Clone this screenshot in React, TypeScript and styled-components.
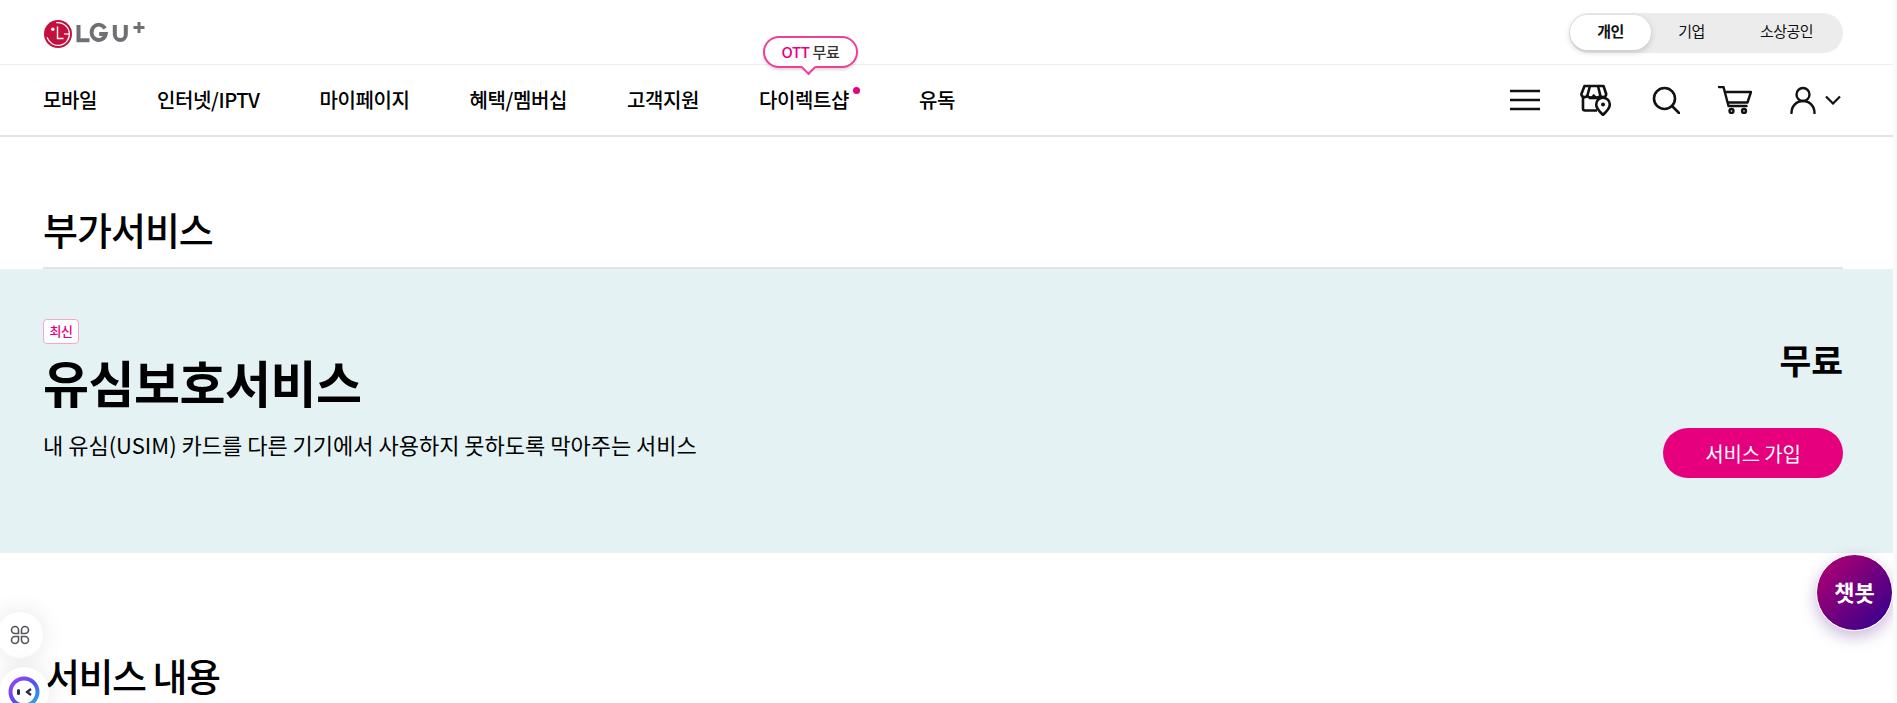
import React from 'react';
import styled, { createGlobalStyle } from 'styled-components';

const GlobalStyle = createGlobalStyle`
  html, body {
    margin: 0;
    padding: 0;
    height: 703px;
    overflow: hidden;
    background: #fafafa;
  }
  body {
    font-family: 'Noto Sans CJK KR', 'Noto Sans', sans-serif;
    color: #000;
  }
`;

const Page = styled.div`
  width: 1893px;
  height: 703px;
  overflow: hidden;
  position: relative;
  background: #fff;
`;

const TopBar = styled.div`
  height: 65px;
  box-sizing: border-box;
  border-bottom: 1px solid #eee;
  padding: 13px 50px 0 43px;
  display: flex;
  justify-content: space-between;
  align-items: flex-start;
`;

const Logo = styled.a`
  display: flex;
  align-items: flex-start;
  margin-top: 6px;
`;

const Segments = styled.div`
  display: flex;
  width: 274px;
  height: 40px;
  border-radius: 20px;
  background: #ececec;
  padding: 2px 0;
  box-sizing: border-box;
`;

const Segment = styled.button<{ $active?: boolean; $w: number }>`
  width: ${p => p.$w}px;
  border: 0;
  padding: 0 0 4px;
  height: 35px;
  margin-left: ${p => (p.$active ? '1px' : '0')};
  border-radius: 18px;
  font: ${p => (p.$active ? 700 : 400)} 15px/26px 'Noto Sans CJK KR', sans-serif;
  letter-spacing: -0.5px;
  color: #111;
  background: ${p => (p.$active ? '#fff' : 'transparent')};
  box-shadow: ${p => (p.$active ? '0 2px 6px rgba(0,0,0,0.18)' : 'none')};
`;

const NavBar = styled.nav`
  height: 72px;
  box-sizing: border-box;
  border-bottom: 2px solid #e4e4e4;
  padding: 0 50px 0 43px;
  display: flex;
  align-items: center;
  justify-content: space-between;
`;

const NavList = styled.ul`
  list-style: none;
  margin: 0;
  padding: 0;
  display: flex;
  gap: 60px;
`;

const NavItem = styled.li<{ $dot?: boolean }>`
  position: relative;
  font-size: 20px;
  font-weight: 500;
  line-height: 28px;
  letter-spacing: -0.4px;
  white-space: nowrap;
  padding-right: ${p => (p.$dot ? '10px' : '0')};
`;

const Dot = styled.span`
  position: absolute;
  top: 1px;
  right: -1px;
  width: 7px;
  height: 7px;
  border-radius: 50%;
  background: #e6007e;
`;

const Bubble = styled.div`
  position: absolute;
  top: -50px;
  left: 4px;
  width: 95px;
  height: 32px;
  box-sizing: border-box;
  background: #fff;
  border: 2px solid #ef3f9b;
  border-radius: 16px;
  box-shadow: 0 2px 3px rgba(0, 0, 0, 0.15);
  font-size: 15px;
  font-weight: 500;
  line-height: 27px;
  text-align: center;
  letter-spacing: -0.4px;
  color: #333;

  &::after {
    content: '';
    position: absolute;
    left: 38px;
    bottom: -7px;
    width: 11px;
    height: 11px;
    box-sizing: border-box;
    background: #fff;
    border-right: 2px solid #ef3f9b;
    border-bottom: 2px solid #ef3f9b;
    transform: rotate(45deg);
  }
`;

const Pink = styled.span`
  color: #e6007e;
`;

const IconRow = styled.div`
  display: flex;
  align-items: center;
  gap: 38px;
  margin-right: 2px;
`;

const IconButton = styled.span`
  display: flex;
  align-items: center;
  gap: 9px;
`;

const Main = styled.main`
  padding-top: 42px;
`;

const TitleRow = styled.div`
  margin: 0 50px 0 43px;
  height: 90px;
  box-sizing: border-box;
  border-bottom: 2px solid #e4e4e4;
`;

const PageTitle = styled.h1`
  margin: 0;
  padding-top: 22px;
  font-size: 38px;
  font-weight: 500;
  line-height: 56px;
  letter-spacing: -1px;
`;

const Banner = styled.section`
  height: 284px;
  background: #e4f2f3;
  padding: 50px 50px 0 43px;
  box-sizing: border-box;
  display: flex;
  justify-content: space-between;
`;

const BannerLeft = styled.div`
  display: flex;
  flex-direction: column;
  align-items: flex-start;
`;

const Badge = styled.span`
  width: 36px;
  height: 25px;
  box-sizing: border-box;
  background: #fff;
  border: 1px solid #f5a6d0;
  border-radius: 4px;
  color: #e6007e;
  font-size: 13px;
  font-weight: 500;
  line-height: 22px;
  text-align: center;
  letter-spacing: -0.5px;
`;

const ServiceName = styled.h2`
  margin: 0;
  padding-top: 6px;
  font-size: 50px;
  font-weight: 700;
  line-height: 62px;
  letter-spacing: -0.5px;
`;

const ServiceDesc = styled.p`
  margin: 16px 0 0;
  font-size: 22px;
  font-weight: 400;
  line-height: 32px;
  letter-spacing: 0;
`;

const BannerRight = styled.div`
  display: flex;
  flex-direction: column;
  align-items: flex-end;
`;

const Price = styled.strong`
  margin-top: 15px;
  font-size: 34.5px;
  font-weight: 700;
  line-height: 50px;
`;

const JoinButton = styled.button`
  margin-top: 44px;
  width: 180px;
  height: 50px;
  border: 0;
  border-radius: 25px;
  background: #e6007e;
  color: #fff;
  font: 400 20px/50px 'Noto Sans CJK KR', sans-serif;
  letter-spacing: -0.2px;
`;

const SectionTitle = styled.h2`
  margin: 0;
  padding: 94px 0 0 45px;
  font-size: 38px;
  font-weight: 500;
  line-height: 56px;
  letter-spacing: -1.5px;
`;

const ChatBot = styled.button`
  position: absolute;
  left: 1816px;
  top: 554px;
  width: 77px;
  height: 77px;
  border: 1px solid #fff;
  border-radius: 50%;
  padding: 0 0 3px;
  background: linear-gradient(135deg, #b8006f 0%, #2c0090 100%);
  box-shadow: 0 6px 16px rgba(70, 0, 120, 0.28);
  color: #fff;
  font: 700 22px/30px 'Noto Sans CJK KR', sans-serif;
`;

const FloatCircle = styled.div<{ $top: number; $size: number }>`
  position: absolute;
  left: ${p => (p.$size === 46 ? -3 : -1)}px;
  top: ${p => p.$top}px;
  width: ${p => p.$size}px;
  height: ${p => p.$size}px;
  border-radius: 50%;
  background: #fff;
  box-shadow: 0 0 24px rgba(0, 0, 0, 0.1);
  display: flex;
  align-items: center;
  justify-content: center;
`;

const LgLogo = () => (
  <svg width="104" height="30" viewBox="0 0 104 30" fill="none">
    <circle cx="15" cy="15" r="14" fill="#c5103f" />
    <circle cx="15" cy="15" r="11.4" stroke="#fff" strokeWidth="1.2" strokeDasharray="52 20" transform="rotate(-100 15 15)" />
    <circle cx="9.8" cy="10.2" r="1.7" fill="#fff" />
    <path d="M14.500 7.500v12h6" stroke="#fff" strokeWidth="1.4" />
    <path d="M21 15h5" stroke="#fff" strokeWidth="1.2" />
    <path d="M35.500 6v15.200h11" stroke="#6f7074" strokeWidth="4" />
    <path d="M62 9.500A7.200 7.600 0 1 0 62.800 15h-6.600" stroke="#6f7074" strokeWidth="3.800" />
    <path d="M71.800 6v9.500a5.500 5.500 0 0 0 11 0V6" stroke="#6f7074" strokeWidth="4" />
    <path d="M96 3v11M90.500 8.500h11" stroke="#6f7074" strokeWidth="3" />
  </svg>
);

const MenuIcon = () => (
  <svg width="32" height="22" viewBox="0 0 32 22" stroke="#111" strokeWidth="2.4">
    <path d="M0 2h30M0 11h30M0 20h30" />
  </svg>
);

const StoreIcon = () => (
  <svg width="34" height="32" viewBox="0 0 34 32" fill="none" stroke="#111" strokeWidth="2.6" strokeLinejoin="round">
    <path d="M3 13v11.500a2 2 0 0 0 2 2h12" />
    <path d="M4.500 2h19l2.700 8a3.200 3.200 0 0 1-6 1.500 3.500 3.500 0 0 1-6.400 0 3.500 3.500 0 0 1-6.400 0 3.200 3.200 0 0 1-6-1.500z" />
    <path d="M10 2 7.500 11M18 2l2.200 9" />
    <path d="M9 14h9" />
    <path d="M23 31c-2.800-3.300-6.800-6-6.800-10.500a6.800 6.800 0 0 1 13.600 0c0 4.500-4 7.200-6.800 10.500z" fill="#fff" />
    <circle cx="23" cy="20.500" r="2" fill="#111" stroke="none" />
  </svg>
);

const SearchIcon = () => (
  <svg width="28" height="28" viewBox="0 0 28 28" fill="none" stroke="#111" strokeWidth="2.6" strokeLinecap="round">
    <circle cx="12.500" cy="12.500" r="10.500" />
    <path d="M20.500 20.500 27 27" />
  </svg>
);

const CartIcon = () => (
  <svg width="34" height="28" viewBox="0 0 34 28" fill="none" stroke="#111" strokeWidth="2.400" strokeLinecap="round" strokeLinejoin="round">
    <path d="M1 1h4.500l5 19h18" />
    <path d="M7 6h26l-3.500 10.500H10" />
    <circle cx="13.500" cy="25" r="2" />
    <circle cx="26" cy="25" r="2" />
  </svg>
);

const UserIcon = () => (
  <svg width="26" height="28" viewBox="0 0 26 28" fill="none" stroke="#111" strokeWidth="2.400" strokeLinecap="round">
    <circle cx="13" cy="8.500" r="6.500" />
    <path d="M1.500 27c0-7 5-12 11.500-12s11.500 5 11.500 12" />
  </svg>
);

const ChevronIcon = () => (
  <svg width="16" height="10" viewBox="0 0 16 10" fill="none" stroke="#111" strokeWidth="2.200">
    <path d="M1 1.500l7 7 7-7" />
  </svg>
);

const AppsIcon = () => (
  <svg width="20" height="20" viewBox="0 0 20 20" fill="none" stroke="#55555c" strokeWidth="1.600">
    <path d="M5 1.500a3.500 3.500 0 0 1 3.500 3.500v3.500H5a3.500 3.500 0 0 1 0-7z" />
    <path d="M15 1.500a3.500 3.500 0 0 0-3.500 3.500v3.500H15a3.500 3.500 0 0 0 0-7z" />
    <path d="M5 18.500A3.500 3.500 0 0 0 8.500 15v-3.500H5a3.500 3.500 0 0 0 0 7z" />
    <path d="M15 18.500a3.500 3.500 0 0 1-3.500-3.500v-3.500H15a3.500 3.500 0 0 1 0 7z" />
  </svg>
);

const BotFace = () => (
  <svg width="32" height="32" viewBox="0 0 32 32" fill="none">
    <defs>
      <linearGradient id="botRing" x1="0" y1="0" x2="1" y2="1">
        <stop offset="0" stopColor="#a83cf0" />
        <stop offset="0.55" stopColor="#4a55ee" />
        <stop offset="1" stopColor="#22b8f0" />
      </linearGradient>
    </defs>
    <circle cx="16" cy="16" r="13.500" fill="#fff" stroke="url(#botRing)" strokeWidth="4" />
    <rect x="9" y="13" width="3" height="6" rx="1.500" fill="#2a2a3a" />
    <path d="M23 13l-4 3 4 3" stroke="#2a2a3a" strokeWidth="2.200" />
  </svg>
);

const navItems = ['모바일', '인터넷/IPTV', '마이페이지', '혜택/멤버십', '고객지원', '다이렉트샵', '유독'];

export default function App() {
  return (
    <Page>
      <GlobalStyle />
      <header>
        <TopBar>
          <Logo><LgLogo /></Logo>
          <Segments>
            <Segment $active $w={81}>개인</Segment>
            <Segment $w={81}>기업</Segment>
            <Segment $w={109}>소상공인</Segment>
          </Segments>
        </TopBar>
        <NavBar>
          <NavList>
            {navItems.map(item => (
              <NavItem key={item} $dot={item === '다이렉트샵'}>
                {item}
                {item === '다이렉트샵' && (
                  <>
                    <Bubble><Pink>OTT</Pink> 무료</Bubble>
                    <Dot />
                  </>
                )}
              </NavItem>
            ))}
          </NavList>
          <IconRow>
            <IconButton><MenuIcon /></IconButton>
            <IconButton><StoreIcon /></IconButton>
            <IconButton><SearchIcon /></IconButton>
            <IconButton><CartIcon /></IconButton>
            <IconButton><UserIcon /><ChevronIcon /></IconButton>
          </IconRow>
        </NavBar>
      </header>
      <Main>
        <TitleRow>
          <PageTitle>부가서비스</PageTitle>
        </TitleRow>
        <Banner>
          <BannerLeft>
            <Badge>최신</Badge>
            <ServiceName>유심보호서비스</ServiceName>
            <ServiceDesc>내 유심(USIM) 카드를 다른 기기에서 사용하지 못하도록 막아주는 서비스</ServiceDesc>
          </BannerLeft>
          <BannerRight>
            <Price>무료</Price>
            <JoinButton>서비스 가입</JoinButton>
          </BannerRight>
        </Banner>
        <SectionTitle>서비스 내용</SectionTitle>
      </Main>
      <FloatCircle $top={612} $size={46}><AppsIcon /></FloatCircle>
      <FloatCircle $top={667} $size={50}><BotFace /></FloatCircle>
      <ChatBot>챗봇</ChatBot>
    </Page>
  );
}
